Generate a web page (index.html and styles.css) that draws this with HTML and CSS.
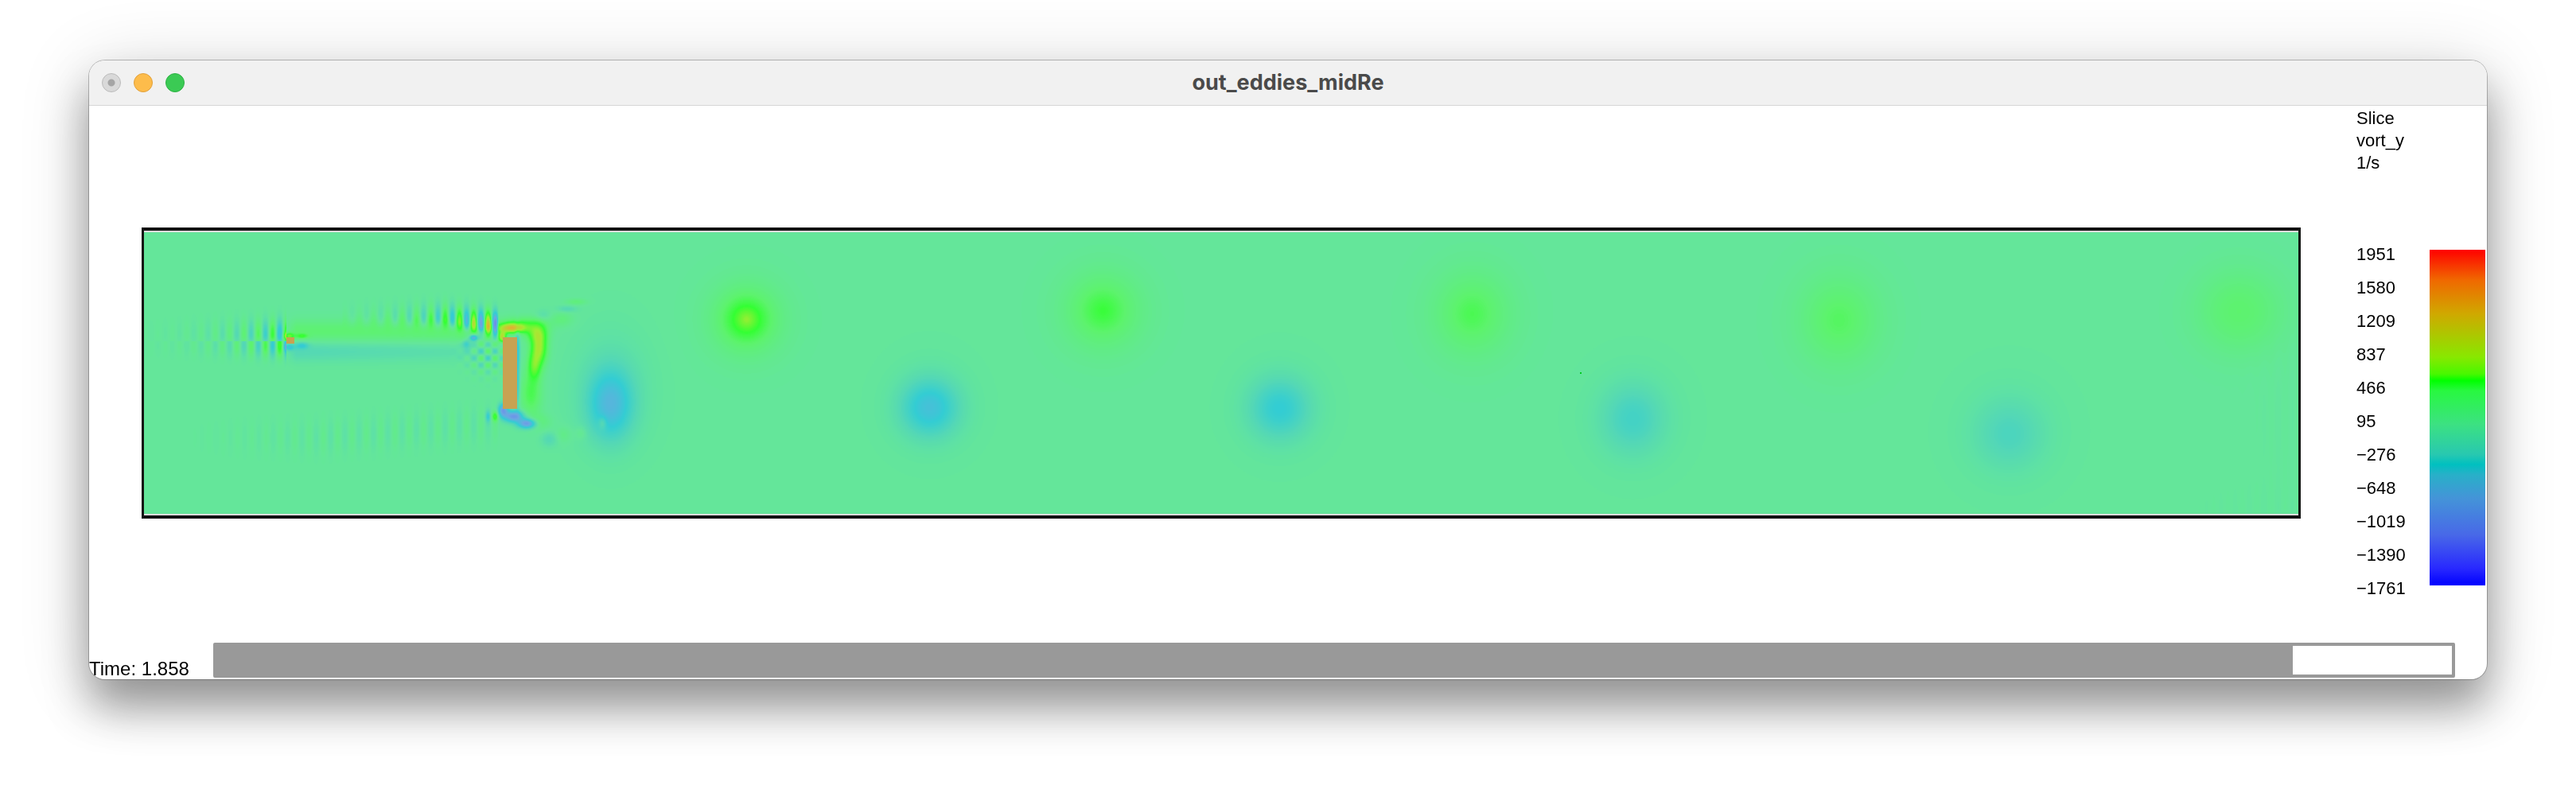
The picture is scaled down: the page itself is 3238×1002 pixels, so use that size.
FILE: index.html
```
<!DOCTYPE html>
<html lang="en">
<head>
<meta charset="utf-8">
<title>out_eddies_midRe</title>
<link rel="stylesheet" href="styles.css">
</head>
<body>
<main class="window">
  <header class="titlebar">
    <div class="controls">
      <button class="dot dot-close" aria-label="Close"></button>
      <button class="dot dot-minimize" aria-label="Minimize"></button>
      <button class="dot dot-zoom" aria-label="Zoom"></button>
    </div>
    <h1 class="title">out_eddies_midRe</h1>
  </header>
  <div class="scene">
    <div class="plot"><canvas class="field" id="field" width="2708" height="354"></canvas></div>
    <aside class="legend">
      <p class="legend-title">Slice<br>vort_y<br>1/s</p>
      <div class="scale">
        <ol class="ticks">
          <li>1951</li><li>1580</li><li>1209</li><li>837</li><li>466</li><li>95</li><li>−276</li><li>−648</li><li>−1019</li><li>−1390</li><li>−1761</li>
        </ol>
        <div class="colorbar"></div>
      </div>
    </aside>
  </div>
  <footer class="timeline">
    <label class="time" for="time">Time: 1.858</label>
    <progress class="timebar" id="time" max="2" value="1.858"></progress>
  </footer>
</main>
<script src="field.js"></script>
</body>
</html>
```
FILE: styles.css
```
* { box-sizing: border-box; }

body {
  display: flex;
  min-height: 100vh;
  margin: 0;
  padding: 76px 112px 148px;
  background: #fff;
  color: #000;
  font-family: "Liberation Sans", Arial, sans-serif;
}

.window {
  display: flex;
  flex: 1;
  flex-direction: column;
  min-width: 0;
  overflow: hidden;
  border-radius: 20px;
  background: #fff;
  box-shadow: 0 0 0 1px rgba(0, 0, 0, 0.24), 0 36px 54px rgba(0, 0, 0, 0.36), 0 10px 90px rgba(0, 0, 0, 0.16);
}

.titlebar {
  display: grid;
  grid-template-columns: 1fr auto 1fr;
  align-items: center;
  height: 57px;
  padding: 0 16px;
  border-bottom: 1px solid #d6d6d6;
  background: #f1f1f1;
}

.controls { display: flex; gap: 16px; }

.dot {
  width: 24px;
  height: 24px;
  padding: 0;
  border: 1px solid;
  border-radius: 50%;
}

.dot-close { border-color: #bababa; background: radial-gradient(circle, #a5a5a5 4px, #d9d9d9 5px); }
.dot-minimize { border-color: #e0a03c; background: #fdbc4b; }
.dot-zoom { border-color: #2eb144; background: #3bca54; }

.title {
  margin: 0;
  color: #4a4a4a;
  font: 700 27px/32px Inter, sans-serif;
}

.scene {
  display: flex;
  flex: 1;
  gap: 70px;
  padding-left: 66px;
}

.plot {
  flex: 1;
  min-width: 0;
  align-self: flex-start;
  margin-top: 153px;
  border: 3px solid #111;
  border-width: 4px 3px;
}

.field {
  display: block;
  width: 100%;
  height: auto;
  border: solid #ddd;
  border-width: 2px 0;
}

.legend {
  width: 164px;
  padding-right: 2px;
  font-size: 22px;
}

.legend-title { margin: 2px 0 80px; line-height: 28px; }

.scale { display: flex; justify-content: space-between; }

.ticks {
  margin: 0;
  padding: 0;
  list-style: none;
  line-height: 42px;
}

.colorbar {
  width: 70px;
  height: 422px;
  margin-top: 15px;
  background: linear-gradient(#ff0000, #f06800 9%, #d0a800 19%, #88e800 32%, #48f800 37%, #00ff00 39%, #28f840 42%, #3ce182 52%, #28c8b0 61%, #00c0c0 64%, #28b0c8 67%, #4494d8 74%, #4868e8 85%, #2828ff 95%, #0000ff);
}

.timeline {
  display: flex;
  align-items: flex-end;
  justify-content: space-between;
  gap: 30px;
  padding: 0 40px 2px 0;
}

.time { font-size: 24px; line-height: 22px; white-space: nowrap; }

.timebar {
  flex: 1;
  height: 44px;
  border: 4px solid #999;
  border-radius: 2px;
  background: #fff;
  appearance: none;
}

.timebar::-webkit-progress-bar { background: #fff; }
.timebar::-webkit-progress-value { background: #999; }
.timebar::-moz-progress-bar { background: #999; }
```
FILE: field.js
```
// Vorticity slice: accumulates eddies and grid ripples, then maps them to colour.
const canvas = document.getElementById('field');
const W = canvas.width, H = canvas.height, X0 = 181, Y0 = 292;
const v = new Float32Array(W * H);

function paint(x1, y1, x2, y2, f) {
  for (let y = Math.max(y1, Y0); y < Math.min(y2, Y0 + H); y++)
    for (let x = Math.max(x1, X0); x < Math.min(x2, X0 + W); x++)
      v[(y - Y0) * W + x - X0] += f(x, y);
}

function spot(cx, cy, ax, ay, peak, p = 2) {
  const k = p < 2 ? 5 : 3;
  paint(Math.floor(cx - k * ax), Math.floor(cy - k * ay), Math.ceil(cx + k * ax), Math.ceil(cy + k * ay),
    (x, y) => peak * Math.exp(-Math.pow(Math.hypot((x - cx) / ax, (y - cy) / ay), p)));
}

const wave = (x, c) => Math.cos(Math.PI * (x - c) / 9);
const bell = (d, s) => Math.exp(-d * d / s / s);

// Detached eddies: x, y, radius x, radius y, peak, falloff
[
  [938, 401, 29, 29, 760, 1.3], [1386, 390, 40, 40, 440, 1.5],
  [1850, 394, 44, 48, 345, 1.6], [2311, 402, 48, 54, 295, 1.7], [2814, 391, 54, 52, 240],
  [1168, 512, 35, 35, -490], [1168, 508, 60, 66, -50],
  [1608, 513, 37, 37, -380], [1608, 511, 62, 68, -45],
  [2052, 526, 38, 42, -260], [2052, 524, 66, 72, -50],
  [2525, 545, 42, 42, -200], [2525, 540, 72, 76, -50],
  [767, 508, 27, 42, -520], [767, 488, 48, 72, -140], [757, 531, 5, 8, 220]
].forEach(s => spot(...s));

// Ripples ahead of the small block
paint(181, 380, 360, 429, (x, y) => -520 * wave(x, 351) * Math.exp((x - 351) / 50) * bell(y - 420, y < 420 ? 18 : 10));
paint(181, 429, 360, 470, (x, y) => 520 * wave(x, 351) * Math.exp((x - 351) / 50) * bell(y - 434, 14));

// Shear layers between the blocks
paint(360, 380, 632, 480, (x, y) => {
  const fade = Math.min(1, (x - 358) / 14) * Math.min(1, (632 - x) / 40);
  return fade * (220 * bell(y - 416, 14) - (200 - (x - 360) * 0.45) * bell(y - 441, 13));
});
[[363, 422, 6, 4, 600], [379, 422, 7, 3, 350], [363, 436, 6, 4, -450], [379, 434, 8, 4, -350]].forEach(s => spot(...s));

// Ripples ahead of the large block
paint(430, 350, 627, 440, (x, y) => {
  const c = 400 + Math.max(0, x - 560) * 0.17;
  return -1350 * wave(x, 622) * Math.exp((x - 622) / 58) * bell(y - c, y < c ? 17 : 10);
});
paint(560, 415, 632, 515, (x, y) => -320 * wave(x, 613) * wave(y, 450) * bell(x - 613, 24) * bell(y - 447, 22));
[[595, 424, 5, 4, -900], [586, 432, 5, 5, -400]].forEach(s => spot(...s));
paint(220, 500, 628, 600, (x, y) => {
  const c = 550 - Math.max(0, x - 400) * 0.08;
  return -80 * wave(x, 559) * Math.min(1, (x - 220) / 200) * bell(y - c, 22);
});

// Recirculation around the large block
[
  [642, 412, 17, 6, 1100], [631, 423, 5, 7, 900], [656, 407, 28, 9, 330],
  [673, 418, 14, 11, 420], [677, 436, 10, 22, 800], [671, 460, 8, 17, 480], [667, 494, 13, 28, 350], [678, 530, 14, 10, 160],
  [650, 440, 3, 26, -450], [650, 485, 3, 28, -400],
  [632, 515, 6, 8, -850], [645, 523, 12, 7, -950], [662, 532, 11, 6, -950], [690, 552, 10, 9, -180],
  [622, 523, 4, 6, 500], [613, 523, 3, 7, -350],
  [724, 379, 13, 4, 170], [712, 388, 12, 4, -170], [682, 396, 9, 7, -140], [706, 401, 14, 9, 150],
  [708, 546, 10, 10, 110], [730, 544, 7, 8, 110]
].forEach(s => spot(...s));

// Faint ripples at the outlet
paint(2690, 420, 2889, 640, (x, y) => -24 * wave(x, 2863) * bell(x - 2889, 50) * bell(y - 520, 80));
paint(2690, 590, 2889, 646, (x, y) => -22 * wave(x, 2863) * bell(x - 2889, 120) * bell(y - 640, 30));

const stops = [
  [-1761, 0, 0, 255], [-1390, 64, 72, 245], [-800, 72, 145, 218], [-420, 0, 192, 200], [-200, 40, 205, 165],
  [0, 61, 224, 129], [250, 52, 240, 72], [466, 0, 255, 0], [800, 136, 232, 0], [1240, 208, 168, 0], [1690, 240, 104, 0], [1951, 255, 0, 0]
];
const ctx = canvas.getContext('2d');
const image = ctx.createImageData(W, H);
for (let i = 0; i < v.length; i++) {
  const q = Math.max(-1761, Math.min(1950, Math.round(v[i] / 14.5) * 14.5));
  let k = 1;
  while (stops[k][0] < q) k++;
  const a = stops[k - 1], b = stops[k], t = (q - a[0]) / (b[0] - a[0]);
  for (let c = 0; c < 3; c++) image.data[i * 4 + c] = 51 + 0.8 * (a[c + 1] + t * (b[c + 1] - a[c + 1]));
  image.data[i * 4 + 3] = 255;
}
ctx.putImageData(image, 0, 0);

// Solid blocks and the probe point
ctx.fillStyle = '#c8a252';
ctx.fillRect(360 - X0, 424 - Y0, 10, 8);
ctx.fillRect(632 - X0, 424 - Y0, 18, 90);
ctx.fillStyle = '#00cc1f';
ctx.fillRect(1986 - X0, 468 - Y0, 2, 2);
```
